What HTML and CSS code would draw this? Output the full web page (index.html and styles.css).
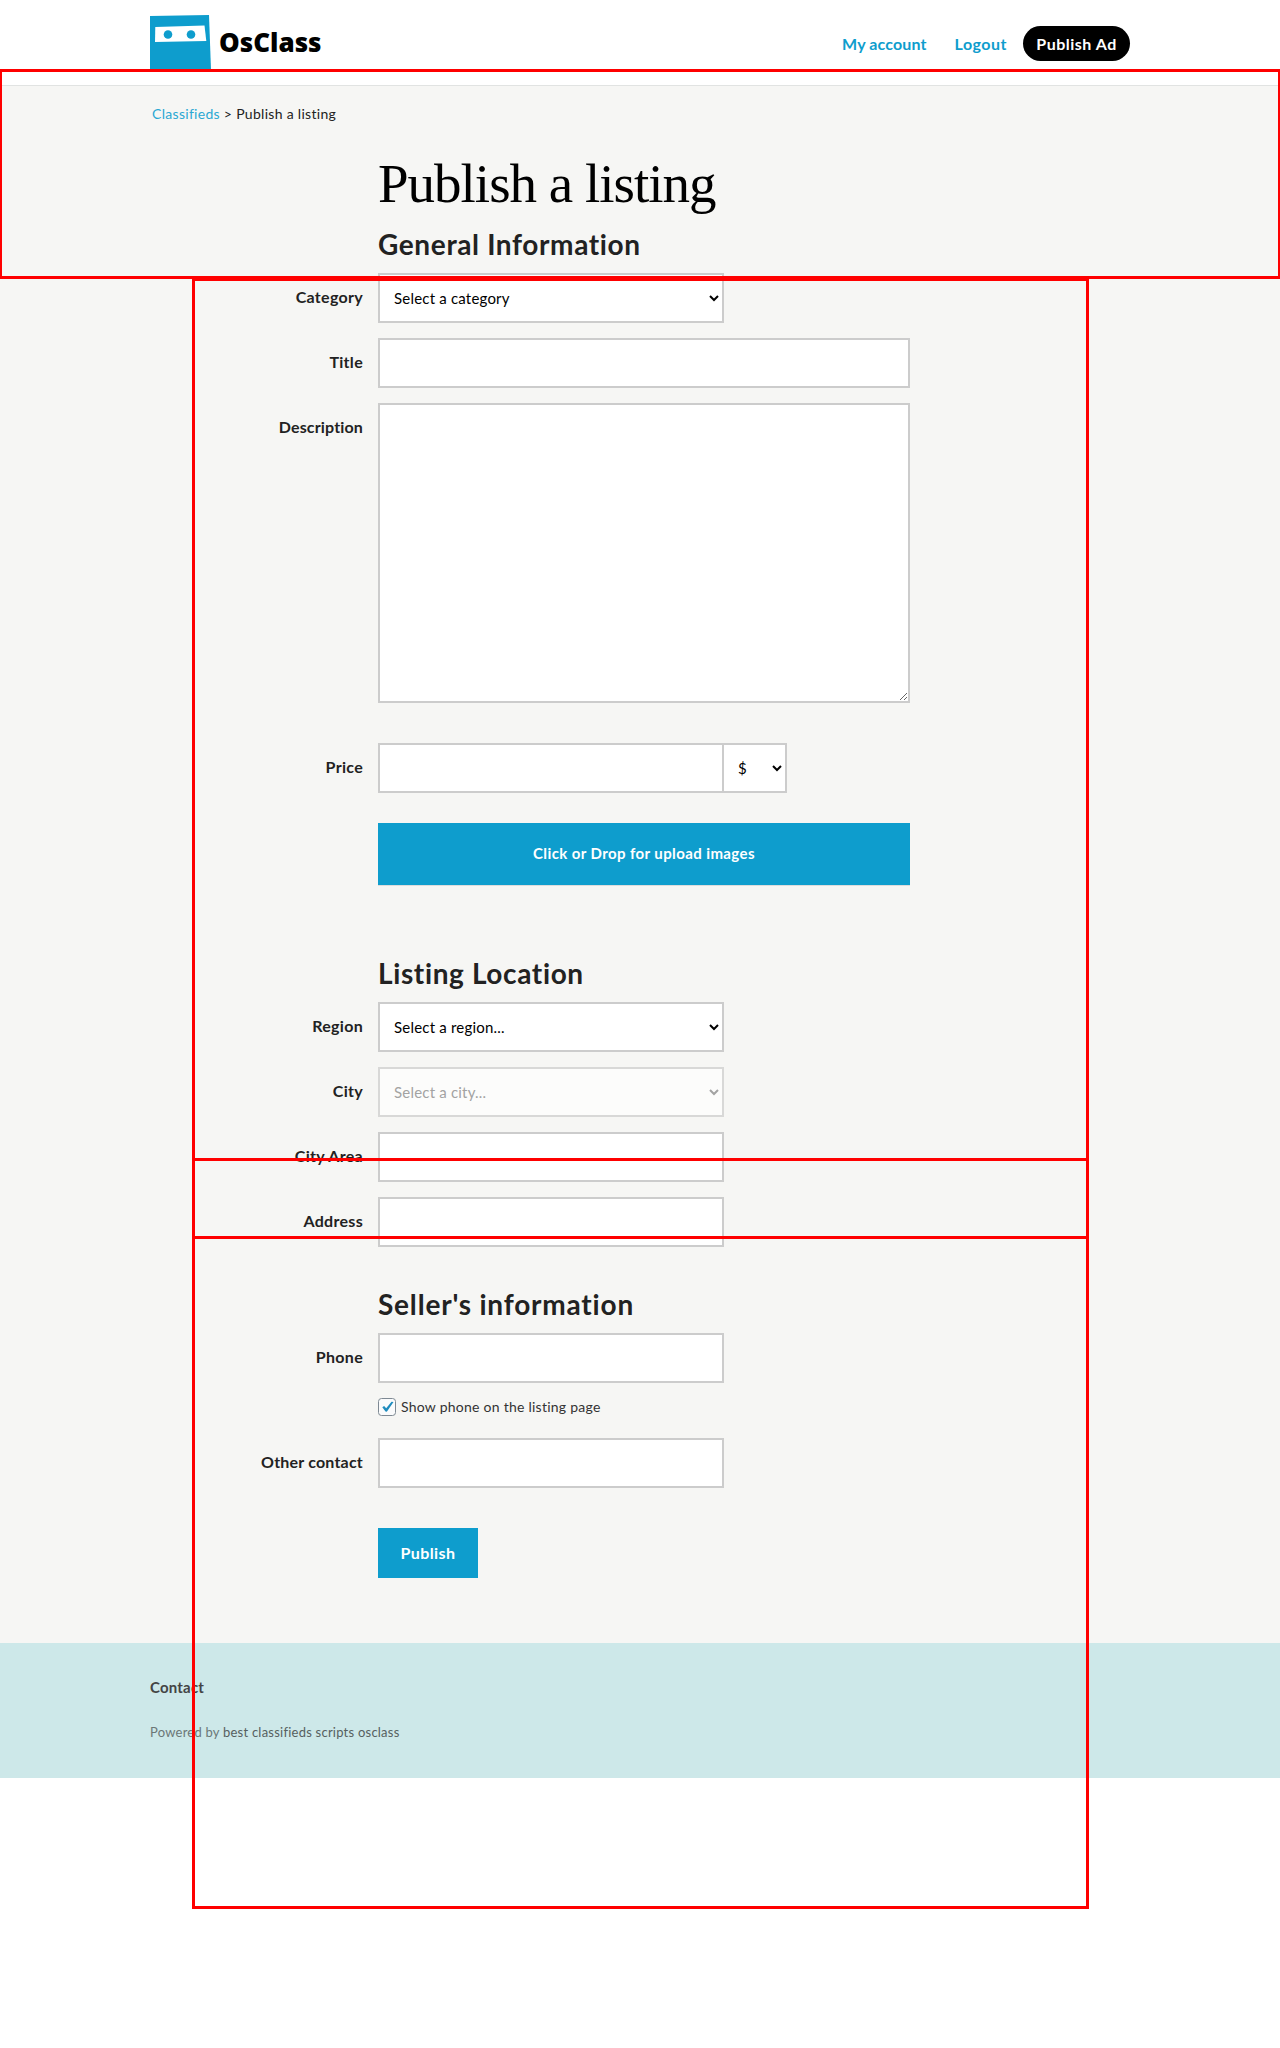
FILE: index.html
```
<!DOCTYPE html>
<html lang="en">
<head>
<meta charset="utf-8">
<title>Publish a listing - OsClass</title>
<link rel="stylesheet" href="styles.css">
</head>
<body>
<header class="header">
  <div class="container header-inner">
    <a class="logo">
      <svg width="61" height="55" viewBox="0 0 61 55" aria-hidden="true">
        <path d="M0 1 59 0 61 55H0Z" fill="#0e9dcd"/>
        <path d="M5.3 12 54.5 10.5 56.3 26 5 27Z" fill="#fff"/>
        <circle cx="18" cy="19.5" r="4.3" fill="#0e9dcd"/>
        <circle cx="41" cy="19.5" r="4.3" fill="#0e9dcd"/>
      </svg>
      <span class="logo-text">OsClass</span>
    </a>
    <nav class="nav">
      <a class="nav-account">My account</a>
      <a class="nav-logout">Logout</a>
      <a class="pill">Publish Ad</a>
    </nav>
  </div>
</header>
<main class="main">
  <div class="container">
    <div class="breadcrumb"><a>Classifieds</a> &gt; Publish a listing</div>
    <form class="form">
      <h1>Publish a listing</h1>
      <h2>General Information</h2>
      <div class="row"><label>Category</label><select class="field"><option>Select a category</option></select></div>
      <div class="row"><label>Title</label><input class="field wide" type="text"></div>
      <div class="row row-description"><label>Description</label><textarea class="field wide"></textarea></div>
      <div class="row row-price"><label>Price</label><div class="price"><input class="field" type="text"><select class="field currency"><option>$</option></select></div></div>
      <div class="upload">Click or Drop for upload images</div>
      <h2>Listing Location</h2>
      <div class="row"><label>Region</label><select class="field"><option>Select a region...</option></select></div>
      <div class="row"><label>City</label><select class="field" disabled><option>Select a city...</option></select></div>
      <div class="row"><label>City Area</label><input class="field" type="text"></div>
      <div class="row row-address"><label>Address</label><input class="field" type="text"></div>
      <h2 class="seller">Seller's information</h2>
      <div class="row"><label>Phone</label><input class="field" type="text"></div>
      <div class="check">
        <svg width="18" height="18" viewBox="0 0 18 18" aria-hidden="true">
          <rect x=".5" y=".5" width="17" height="17" rx="3" fill="#fafbfc" stroke="#7e8993"/>
          <path d="M4.3 9.2 6.1 7.9 8.2 10.2 13.5 3.8 15.5 4.1 8.8 13.7 7.5 13.6Z" fill="#1e8cbe"/>
        </svg>
        <span>Show phone on the listing page</span>
      </div>
      <div class="row row-contact"><label>Other contact</label><input class="field" type="text"></div>
      <button class="submit" type="button">Publish</button>
    </form>
  </div>
</main>
<footer class="footer">
  <div class="container">
    <div class="footer-link">Contact</div>
    <div class="powered">Powered by <span>best classifieds scripts osclass</span></div>
  </div>
</footer>
<div class="frame frame-top"></div>
<div class="frame frame-middle"></div>
<div class="frame frame-bottom"></div>
</body>
</html>
```
FILE: styles.css
```
* { box-sizing: border-box; }
body {
  position: relative;
  min-height: 2048px;
  margin: 0;
  background: #fff;
  color: #222;
  font: 16px/24px Lato, sans-serif;
  letter-spacing: .3px;
}
.container { width: 980px; margin: 0 auto; }
.header { height: 86px; border-bottom: 1px solid #e1e3e2; }
.header-inner { display: flex; justify-content: space-between; padding-top: 15px; }
.logo { display: flex; gap: 8px; }
.logo-text {
  padding-top: 9px;
  color: #000;
  font: 900 26px/36px "Noto Sans", sans-serif;
  letter-spacing: 0;
}
.nav {
  display: flex;
  align-items: center;
  height: 35px;
  margin-top: 11px;
  color: #0e9dcd;
  font-weight: 700;
}
.nav-account { margin-right: 28px; letter-spacing: .12px; }
.nav-logout { margin-right: 16px; letter-spacing: .5px; }
.pill {
  width: 107px;
  border-radius: 18px;
  background: #000;
  color: #fff;
  line-height: 35px;
  text-align: center;
  letter-spacing: .5px;
}
.main { height: 1557px; background: #f6f6f4; }
.breadcrumb { padding: 18px 0 0 2px; font-size: 14px; line-height: 20px; letter-spacing: .3px; }
.breadcrumb a { color: #2aa8d3; }
.form { padding-top: 26px; }
h1, h2, .upload, .check, .submit { margin-left: 228px; }
h1 {
  margin-top: 0;
  margin-bottom: 0;
  color: #000;
  font: 400 55px/68px "Liberation Serif", serif;
  letter-spacing: -1px;
}
h2 {
  margin-top: 8px;
  margin-bottom: 11px;
  font-size: 28px;
  line-height: 36px;
  letter-spacing: .63px;
}
.seller { letter-spacing: .8px; }
.row {
  display: grid;
  grid-template-columns: 213px 1fr;
  column-gap: 15px;
  align-items: center;
  margin-bottom: 15px;
}
.row label { padding-bottom: 2px; text-align: right; font-weight: 700; }
.field {
  width: 346px;
  height: 50px;
  margin: 0;
  padding: 0 10px;
  border: 2px solid #ccc;
  border-radius: 0;
  background: #fff;
  color: #000;
  font: 15px/20px Lato, sans-serif;
  letter-spacing: .2px;
}
.field:disabled { opacity: .7; color: #808080; }
.wide { width: 532px; }
.row-description { align-items: start; margin-bottom: 40px; }
.row-description label { padding-top: 12px; letter-spacing: .15px; }
textarea.field { display: block; height: 300px; }
.row-price { margin-bottom: 30px; }
.price { display: flex; }
.currency { width: 65px; margin-left: -2px; }
.upload {
  width: 532px;
  height: 63px;
  margin-bottom: 69px;
  border-bottom: 1px solid #dcdcdc;
  background: #0e9dcd;
  color: #fff;
  font-size: 15px;
  font-weight: 700;
  line-height: 61px;
  text-align: center;
  letter-spacing: .4px;
}
.row-address { margin-bottom: 39px; }
.check {
  display: flex;
  align-items: center;
  gap: 5px;
  height: 18px;
  margin-bottom: 22px;
  font-size: 14px;
  letter-spacing: .25px;
}
.check span { color: #333; }
.row-contact { margin-bottom: 40px; }
.row-contact label { letter-spacing: .2px; }
.submit {
  display: block;
  width: 100px;
  height: 50px;
  padding: 0;
  border: 0;
  background: #0e9dcd;
  color: #fff;
  font: 700 16px/50px Lato, sans-serif;
  letter-spacing: .4px;
}
.footer { height: 135px; padding-top: 32px; background: #cde8e9; color: #444; }
.footer-link { font-size: 15px; font-weight: 700; letter-spacing: .2px; }
.powered { margin-top: 21px; color: #6b7777; font-size: 13px; letter-spacing: .23px; }
.powered span { color: #566060; }
.frame { position: absolute; border: 3px solid #f00; pointer-events: none; }
.frame-top { top: 69px; left: 0; width: 1280px; height: 210px; border-left-width: 2px; border-right-width: 2px; }
.frame-middle { top: 278px; left: 192px; width: 897px; height: 961px; }
.frame-bottom { top: 1158px; left: 192px; width: 897px; height: 751px; }
```
